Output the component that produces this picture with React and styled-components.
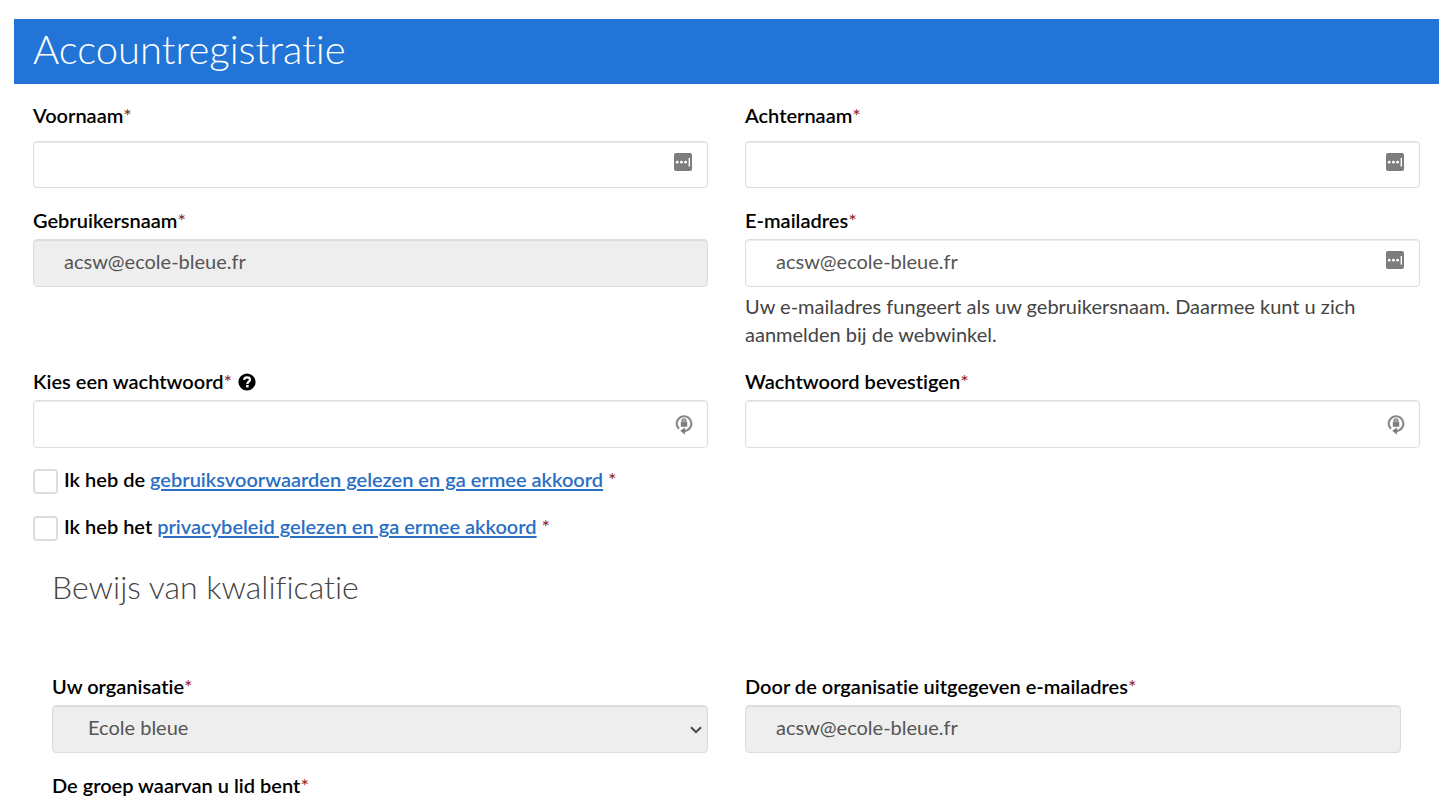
import React from "react";
import styled, { createGlobalStyle } from "styled-components";

const GlobalStyle = createGlobalStyle`
  *, *::before, *::after { box-sizing: border-box; }
  body {
    margin: 0;
    background: #fff;
    color: #444;
    font-family: Lato, "Open Sans", sans-serif;
    font-size: 20px;
    font-variant-ligatures: none;
    line-height: 28px;
  }
`;

const Page = styled.main`
  height: 100vh;
  overflow-y: auto;
  scrollbar-width: none;
  padding: 19px 9px 19px 14px;
`;

const Banner = styled.header`
  background: #2275d7;
  padding: 6px 19px 11px;
`;

const Title = styled.h1`
  margin: 0;
  color: #fff;
  font-size: 40px;
  font-weight: 300;
  line-height: 48px;
`;

const Form = styled.form`
  display: flex;
  flex-direction: column;
  gap: 19px;
  padding: 18px 19px 0;
`;

const Row = styled.div`
  display: grid;
  grid-template-columns: 1fr 1fr;
  column-gap: 37px;
`;

const Field = styled.div`
  display: flex;
  flex-direction: column;
  min-width: 0;
  gap: ${(p) => (p.$spaced ? "11px" : "4px")};
`;

const LabelLine = styled.div`
  display: flex;
  align-items: center;
  gap: 6px;
  height: 28px;
`;

const Label = styled.label`
  align-self: flex-start;
  color: #000;
  font-weight: 600;
  line-height: 26px;
`;

const Star = styled.span`
  color: #8f1d22;
  font-weight: 400;
`;

const Control = styled.div`
  position: relative;
  display: flex;
`;

const fieldLook = `
  width: 100%;
  min-width: 0;
  margin: 0;
  border: 1px solid #ddd;
  border-radius: 4px;
  box-shadow: inset 0 1px 1px rgba(0, 0, 0, 0.08);
  color: #555;
  font: inherit;
  outline: none;
`;

const TextInput = styled.input`
  ${fieldLook}
  height: ${(p) => (p.$spaced ? "47px" : "48px")};
  padding: 0 50px 4px 30px;
  background: ${(p) => (p.readOnly ? "#eee" : "#fff")};
`;

const Select = styled.select`
  ${fieldLook}
  height: 48px;
  padding: 0 36px 4px 35px;
  appearance: none;
  background: #eee;
  opacity: 1;
`;

const Adornment = styled.span`
  position: absolute;
  top: ${(p) => p.$top}px;
  right: ${(p) => p.$right}px;
  display: flex;
  pointer-events: none;
`;

const HelpButton = styled.button`
  display: flex;
  padding: 0;
  border: 0;
  background: none;
`;

const Hint = styled.p`
  margin: 1px 0;
`;

const Consent = styled.div`
  display: flex;
  align-items: flex-start;
  gap: 6px;
  height: 28px;
`;

const ConsentLabel = styled(Label)`
  line-height: 24px;
`;

const Checkbox = styled.input`
  appearance: none;
  width: 25px;
  height: 25px;
  margin: 2px 0 0;
  border: 2px solid #ddd;
  border-radius: 4px;
  background: #fff;
`;

const Link = styled.a`
  color: #2a6fc4;
  text-decoration: underline;
  text-decoration-thickness: 2px;
  text-underline-offset: 2px;
`;

const Section = styled.section`
  display: flex;
  flex-direction: column;
  gap: 19px;
  padding: 6px 19px 0;
`;

const SectionTitle = styled.h2`
  margin: 0 0 47px;
  color: #444;
  font-size: 32px;
  font-weight: 300;
  line-height: 40px;
`;

const PasswordManagerIcon = () => (
  <svg width="18" height="18" viewBox="0 0 18 18" aria-hidden="true">
    <rect width="18" height="18" rx="2" fill="#7d7d7d" />
    <circle cx="3.2" cy="9.2" r="1.4" fill="#fff" />
    <circle cx="7.4" cy="9.2" r="1.4" fill="#fff" />
    <circle cx="11.6" cy="9.2" r="1.4" fill="#fff" />
    <rect x="14.6" y="5" width="1.4" height="8.6" fill="#fff" />
  </svg>
);

const GeneratePasswordIcon = () => (
  <svg width="18" height="22" viewBox="0 0 18 22" aria-hidden="true">
    <path d="M4 15.8A7.3 7.3 0 1 1 15 14.8Q12.8 17.8 9.5 17.8" fill="none" stroke="#8a8a8a" strokeWidth="2.2" />
    <path d="M5.2 17.8L10 14.4V21.4Z" fill="#7d7d7d" />
    <rect x="5.8" y="9" width="6.4" height="4.8" rx="0.6" fill="#7d7d7d" />
    <path d="M7 9.2V7.8a2 2 0 0 1 4 0V9.2" fill="#aaa" stroke="#8a8a8a" strokeWidth="1.3" />
  </svg>
);

const QuestionIcon = () => (
  <svg width="18" height="18" viewBox="0 0 18 18" aria-hidden="true">
    <circle cx="9" cy="9" r="8.6" fill="#000" />
    <path d="M6 6.9C6.3 5.1 7.4 4.4 9 4.4c1.8 0 3 .9 3 2.3 0 2-2.6 2-2.6 4.2" fill="none" stroke="#fff" strokeWidth="2.2" />
    <rect x="8.1" y="12" width="2.5" height="2.4" fill="#fff" />
  </svg>
);

const Chevron = () => (
  <svg width="12" height="8" viewBox="0 0 12 8" aria-hidden="true">
    <path d="M1 1.2l5 5 5-5" fill="none" stroke="#484848" strokeWidth="2" />
  </svg>
);

const adornments = {
  manager: { Icon: PasswordManagerIcon, top: 12, right: 16 },
  generate: { Icon: GeneratePasswordIcon, top: 13, right: 15 },
};

function TextField({ id, label, type = "text", value = "", readOnly, icon, help, hint, spaced }) {
  const extra = adornments[icon];
  return (
    <Field $spaced={spaced}>
      <LabelLine>
        <Label htmlFor={id}>{label}<Star>*</Star></Label>
        {help && <HelpButton type="button" aria-label={help}><QuestionIcon /></HelpButton>}
      </LabelLine>
      <Control>
        <TextInput id={id} type={type} defaultValue={value} readOnly={readOnly} $spaced={spaced} />
        {extra && <Adornment $top={extra.top} $right={extra.right}><extra.Icon /></Adornment>}
      </Control>
      {hint && <Hint>{hint}</Hint>}
    </Field>
  );
}

function SelectField({ id, label, options }) {
  return (
    <Field>
      <LabelLine>
        <Label htmlFor={id}>{label}<Star>*</Star></Label>
      </LabelLine>
      <Control>
        <Select id={id} disabled>
          {options.map((option) => <option key={option}>{option}</option>)}
        </Select>
        <Adornment $top={21} $right={6}><Chevron /></Adornment>
      </Control>
    </Field>
  );
}

function ConsentField({ id, lead, link }) {
  return (
    <Consent>
      <Checkbox type="checkbox" id={id} />
      <ConsentLabel htmlFor={id}>
        {lead} <Link href="#">{link}</Link> <Star>*</Star>
      </ConsentLabel>
    </Consent>
  );
}

export default function App() {
  return (
    <>
      <GlobalStyle />
      <Page>
        <Banner><Title>Accountregistratie</Title></Banner>
        <Form>
          <Row>
            <TextField id="first" label="Voornaam" icon="manager" spaced />
            <TextField id="last" label="Achternaam" icon="manager" spaced />
          </Row>
          <Row>
            <TextField id="user" label="Gebruikersnaam" value="acsw@ecole-bleue.fr" readOnly />
            <TextField
              id="email"
              type="email"
              label="E-mailadres"
              value="acsw@ecole-bleue.fr"
              icon="manager"
              hint="Uw e-mailadres fungeert als uw gebruikersnaam. Daarmee kunt u zich aanmelden bij de webwinkel."
            />
          </Row>
          <Row>
            <TextField id="password" type="password" label="Kies een wachtwoord" icon="generate" help="Help" />
            <TextField id="confirm" type="password" label="Wachtwoord bevestigen" icon="generate" />
          </Row>
          <ConsentField id="terms" lead="Ik heb de" link="gebruiksvoorwaarden gelezen en ga ermee akkoord" />
          <ConsentField id="privacy" lead="Ik heb het" link="privacybeleid gelezen en ga ermee akkoord" />
          <Section>
            <SectionTitle>Bewijs van kwalificatie</SectionTitle>
            <Row>
              <SelectField id="organisation" label="Uw organisatie" options={["Ecole bleue"]} />
              <TextField id="orgEmail" type="email" label="Door de organisatie uitgegeven e-mailadres" value="acsw@ecole-bleue.fr" readOnly />
            </Row>
            <Row>
              <SelectField id="group" label="De groep waarvan u lid bent" options={[""]} />
            </Row>
          </Section>
        </Form>
      </Page>
    </>
  );
}
